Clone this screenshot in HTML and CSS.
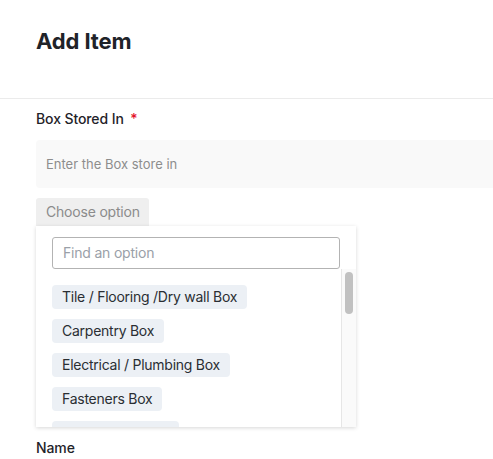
FILE: index.html
```html
<!DOCTYPE html>
<html>
<head>
<meta charset="utf-8">
<link rel="stylesheet" href="styles.css">
</head>
<body>
<div class="page">
  <header class="header">
    <h1 class="title">Add Item</h1>
  </header>
  <main class="form">
    <div class="field">
      <label class="label">Box Stored In <span class="req">*</span></label>
      <div class="input">Enter the Box store in</div>
      <div class="select-wrap">
        <div class="choose">Choose option</div>
        <div class="dropdown">
          <div class="search">Find an option</div>
          <div class="list-row">
            <div class="list">
              <div class="chip">Tile / Flooring /Dry wall Box</div>
              <div class="chip">Carpentry Box</div>
              <div class="chip">Electrical / Plumbing Box</div>
              <div class="chip">Fasteners Box</div>
              <div class="chip">Accessories Box</div>
            </div>
            <div class="scrollbar"><div class="thumb"></div></div>
          </div>
        </div>
      </div>
    </div>
    <div class="field name-field">
      <label class="label">Name</label>
    </div>
  </main>
</div>
</body>
</html>
```
FILE: styles.css
```css
* { box-sizing: border-box; }
html, body { margin: 0; padding: 0; background: #fff; }
body {
  font-family: Inter, "Noto Sans", "Liberation Sans", sans-serif;
  color: #1f2329;
  width: 493px;
  height: 459px;
  overflow: hidden;
}
.header {
  height: 99px;
  border-bottom: 1px solid #ebebeb;
  padding: 26px 36px 0;
}
.title {
  margin: 0;
  font-size: 22px;
  line-height: 30px;
  font-weight: 700;
  color: #1f2329;
  letter-spacing: -0.1px;
}
.form {
  padding: 10px 0 0 36px;
}
.field {
  display: flex;
  flex-direction: column;
}
.label {
  font-size: 14px;
  line-height: 20px;
  font-weight: 500;
  color: #1f2329;
  letter-spacing: -0.1px;
}
.req {
  color: #e3132a;
  margin-left: 3px;
}
.input {
  margin-top: 11px;
  height: 48px;
  width: 470px;
  background: #f9f9f9;
  border-radius: 4px 0 0 4px;
  font-size: 13px;
  line-height: 48px;
  color: #8d8d8d;
  padding-left: 10px;
}
.select-wrap {
  position: relative;
  margin-top: 10px;
  height: 28px;
}
.choose {
  display: inline-block;
  height: 28px;
  width: 113px;
  background: #efefef;
  border-radius: 3px 3px 0 0;
  color: #8b8b8b;
  font-size: 14px;
  line-height: 28px;
  padding-left: 10px;
  letter-spacing: -0.2px;
}
.dropdown {
  position: absolute;
  top: 28px;
  left: 0;
  width: 320px;
  height: 201px;
  background: #fff;
  box-shadow: 0 1px 4px rgba(0,0,0,0.16);
  display: flex;
  flex-direction: column;
  z-index: 2;
}
.search {
  margin: 11px 16px 0;
  height: 32px;
  border: 1px solid #b3b3b3;
  border-radius: 3px;
  font-size: 14px;
  line-height: 30px;
  color: #9aa0a8;
  padding-left: 10px;
  letter-spacing: -0.2px;
}
.list-row {
  flex: 1;
  display: flex;
  min-height: 0;
}
.list {
  flex: 1;
  overflow: hidden;
  padding: 16px 0 0 16px;
  display: flex;
  flex-direction: column;
  align-items: flex-start;
  gap: 10px;
}
.chip {
  flex: none;
  height: 24px;
  background: #ecf0f5;
  border-radius: 4px;
  font-size: 14px;
  line-height: 24px;
  color: #2a2e33;
  padding: 0 10px;
  letter-spacing: -0.25px;
}
.scrollbar {
  width: 15px;
  background: #fafafa;
  border-left: 1px solid #e6e6e6;
  padding: 3px 0 0 3px;
}
.thumb {
  width: 8px;
  height: 42px;
  border-radius: 4px;
  background: #c1c1c1;
}
.name-field {
  margin-top: 212px;
}
```
